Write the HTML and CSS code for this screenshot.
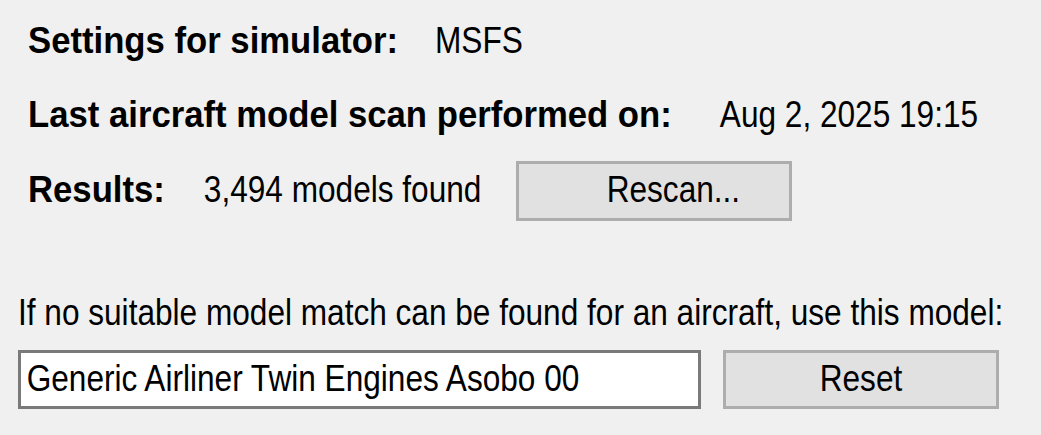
FILE: index.html
```html
<!DOCTYPE html>
<html lang="en">
<head>
<meta charset="utf-8">
<title>Aircraft model settings</title>
<link rel="stylesheet" href="styles.css">
</head>
<body>
<div class="panel">
  <div class="row row-sim">
    <span class="t b">Settings for simulator:</span>
    <span class="t r">MSFS</span>
  </div>
  <div class="row row-scan">
    <span class="t b">Last aircraft model scan performed on:</span>
    <span class="t r">Aug 2, 2025 19:15</span>
  </div>
  <div class="row row-results">
    <span class="t b">Results:</span>
    <span class="t r">3,494 models found</span>
    <button class="btn btn-rescan" type="button"><span class="t r">Rescan...</span></button>
  </div>
  <div class="note"><span class="t r">If no suitable model match can be found for an aircraft, use this model:</span></div>
  <div class="row row-default">
    <div class="textbox"><span class="t r">Generic Airliner Twin Engines Asobo 00</span></div>
    <button class="btn btn-reset" type="button"><span class="t r">Reset</span></button>
  </div>
</div>
</body>
</html>
```

FILE: styles.css
```css
html, body {
  margin: 0;
  padding: 0;
  background: #f0f0f0;
}

body {
  width: 1041px;
  height: 435px;
  overflow: hidden;
  font-family: "Liberation Sans", Arial, sans-serif;
  color: #000;
}

.panel {
  display: flex;
  flex-direction: column;
  align-items: flex-start;
  padding: 23.6px 0 0 18px;
}

/* text spans: stretched vertically to match the tall scaled UI font */
.t {
  display: inline-block;
  line-height: 1;
  white-space: nowrap;
  transform-origin: 0 0.8465em;
}

.t.r {
  font-size: 31.6px;
  font-weight: 400;
  transform: scaleY(1.194);
}

.t.b {
  font-size: 34.7px;
  font-weight: 700;
  transform: scaleY(1.087);
}

.row {
  display: flex;
  align-items: baseline;
  margin-left: 10px;
}

.row-sim { gap: 37px; }

.row-scan {
  gap: 48px;
  margin-top: 39.8px;
}

.row-results {
  margin-top: 28.2px;
}

.row-results .t.r {
  margin-left: 39px;
}

.row-results .btn-rescan {
  margin-left: 34.5px;
}

.btn {
  box-sizing: border-box;
  display: flex;
  align-items: center;
  justify-content: center;
  margin: 0;
  padding: 0;
  background: #e1e1e1;
  border: 3px solid #adadad;
  border-radius: 0;
  color: #000;
  font: inherit;
}

.btn .t {
  margin-left: 0;
}

.btn-rescan {
  width: 276px;
  height: 60px;
  padding-top: 1.5px;
}

.note {
  margin-top: 77.9px;
}

.row-default {
  margin-left: 0;
  margin-top: 19.45px;
  align-items: stretch;
  gap: 22px;
}

.textbox {
  box-sizing: border-box;
  display: flex;
  align-items: center;
  width: 683px;
  height: 59px;
  padding: 2px 0 0 5.7px;
  background: #fff;
  border: 3px solid #7a7a7a;
}

.btn-reset {
  width: 276px;
  height: 59px;
  padding-top: 2px;
}
```
